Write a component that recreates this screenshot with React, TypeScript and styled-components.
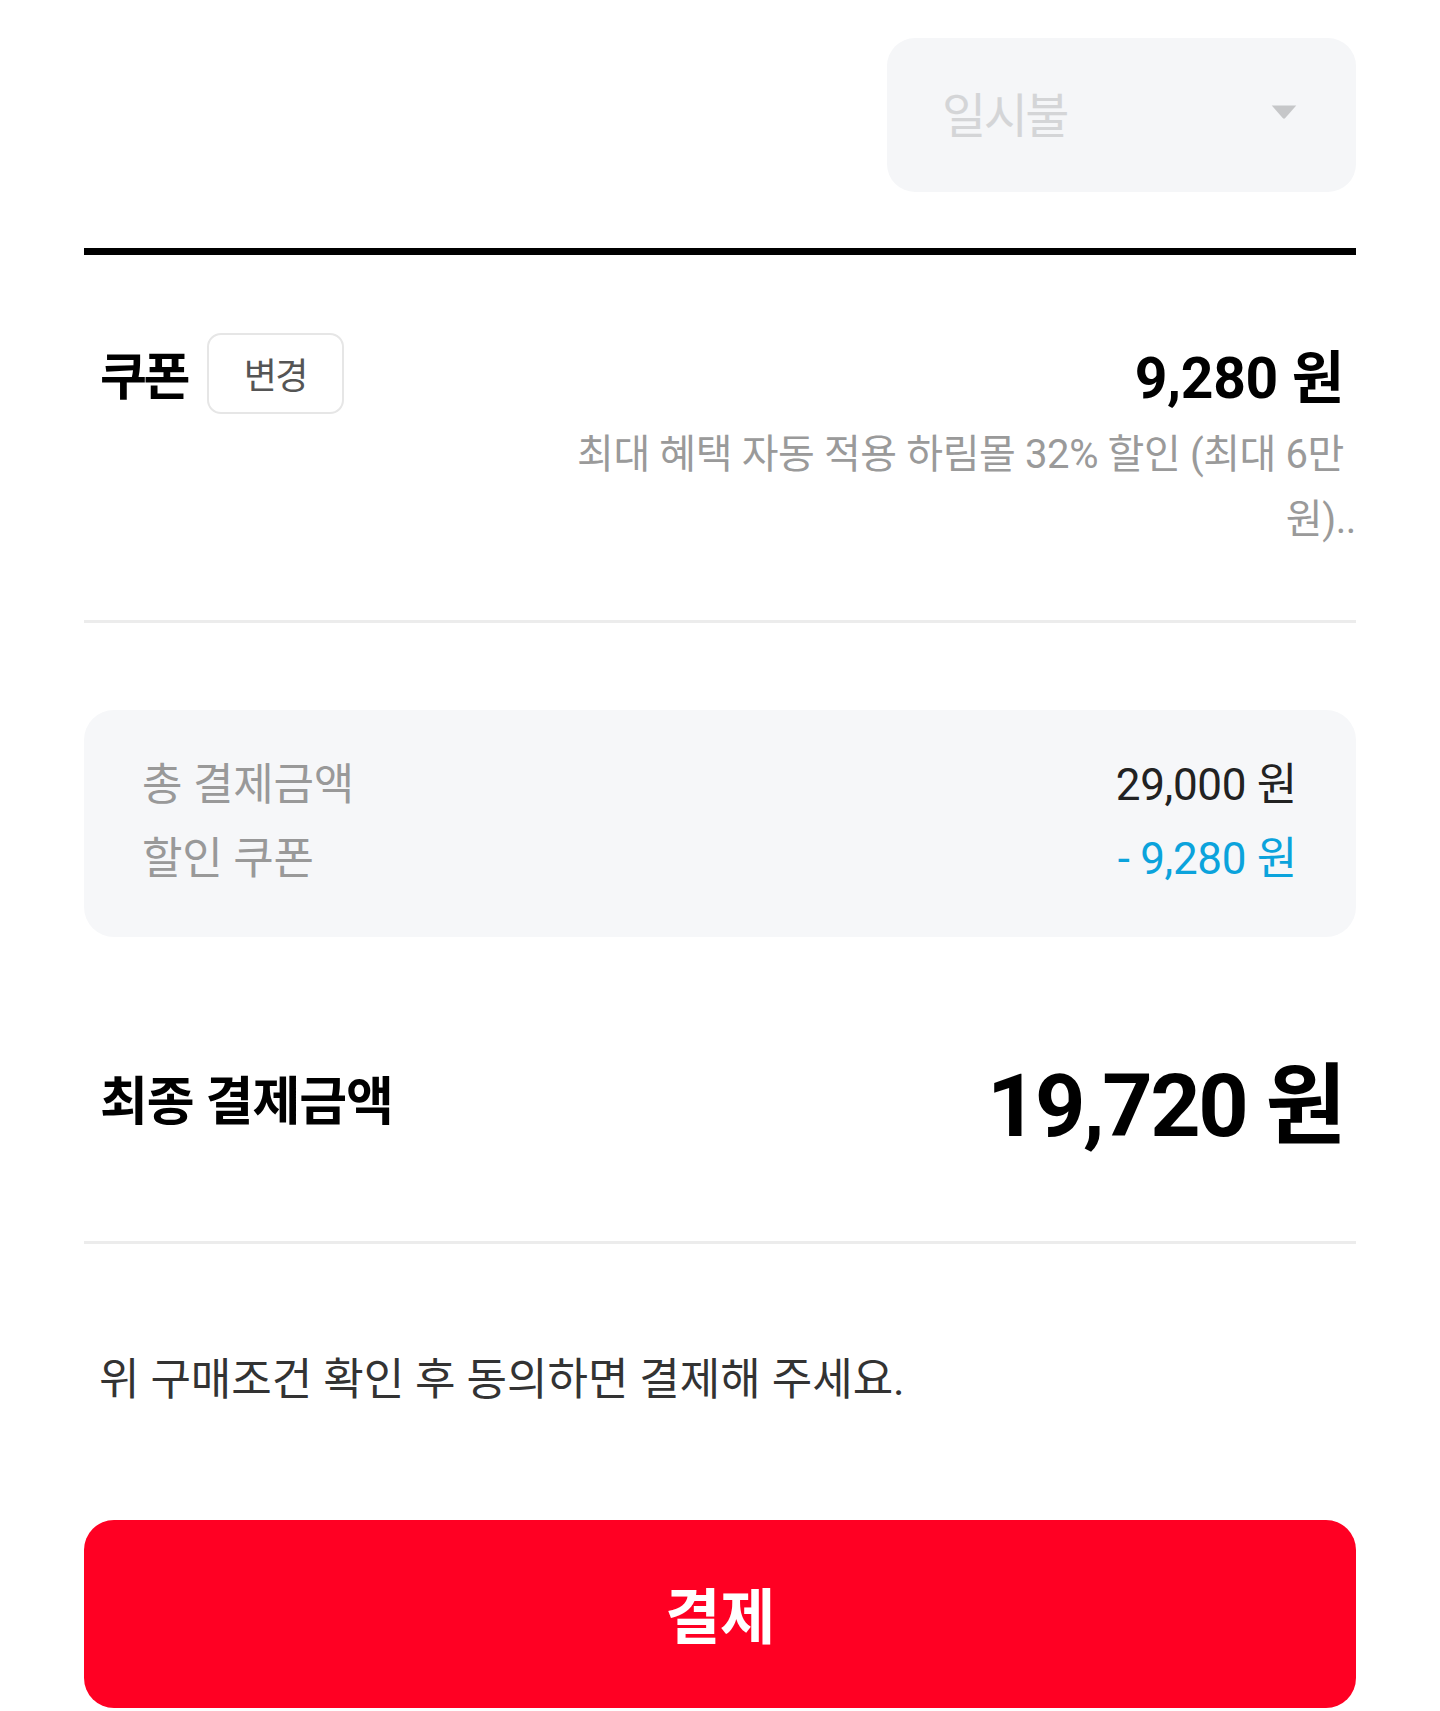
import React from "react";
import styled, { createGlobalStyle } from "styled-components";

const GlobalStyle = createGlobalStyle`
  html, body { margin: 0; padding: 0; background: #ffffff; }
  body {
    font-family: Roboto, "Noto Sans CJK KR", "Noto Sans", sans-serif;
    -webkit-font-smoothing: antialiased;
  }
  * { box-sizing: border-box; }
`;

const Page = styled.div`
  width: 1440px;
  padding: 38px 84px 3px;
  display: flex;
  flex-direction: column;
`;

const SelectRow = styled.div`
  display: flex;
  justify-content: flex-end;
`;

const SelectBox = styled.div`
  width: 469px;
  height: 154px;
  background: #f5f6f8;
  border-radius: 28px;
  padding: 0 58px 6px 55px;
  display: flex;
  align-items: center;
  justify-content: space-between;
`;

const SelectText = styled.span`
  font-size: 48px;
  letter-spacing: -2.5px;
  color: #d4d5d7;
`;

const ThickRule = styled.div`
  margin-top: 56px;
  height: 7px;
  background: #000;
`;

const ThinRule = styled.div<{ $top: number }>`
  margin-top: ${(p) => p.$top}px;
  height: 3px;
  background: #ececec;
`;

const CouponSection = styled.section`
  padding-top: 77px;
  padding-bottom: 68px;
  display: flex;
  flex-direction: column;
`;

const CouponRow = styled.div`
  display: flex;
  align-items: center;
  justify-content: space-between;
  padding: 0 12px 0 16px;
`;

const LeftGroup = styled.div`
  display: flex;
  align-items: center;
  gap: 20px;
`;

const CouponTitle = styled.h2`
  margin: 0;
  font-size: 51px;
  font-weight: 700;
  letter-spacing: -3.5px;
  color: #000;
`;

const ChangeButton = styled.button`
  width: 137px;
  height: 81px;
  border: 2px solid #e6e6e6;
  border-radius: 14px;
  background: #fff;
  font-family: inherit;
  font-size: 36px;
  letter-spacing: -1.5px;
  color: #555;
  padding: 0;
  display: flex;
  align-items: center;
  justify-content: center;
`;

const CouponAmount = styled.span`
  font-size: 57px;
  font-weight: 700;
  letter-spacing: -0.3px;
  color: #000;
`;

const CouponDesc = styled.p`
  margin: 8px 0 0;
  padding-right: 12px;
  text-align: right;
  font-size: 40px;
  line-height: 65px;
  letter-spacing: -0.4px;
  color: #9a9a9a;
`;

const Trail = styled.span`
  margin-right: -12px;
`;

const SummaryBox = styled.div`
  margin-top: 87px;
  height: 227px;
  background: #f6f7f9;
  border-radius: 30px;
  padding: 34px 59px 0 58px;
  display: flex;
  flex-direction: column;
`;

const SummaryRow = styled.div`
  display: flex;
  justify-content: space-between;
  align-items: center;
  height: 74px;
`;

const SummaryLabel = styled.span`
  font-size: 44px;
  letter-spacing: -0.2px;
  color: #999;
`;

const SummaryValue = styled.span<{ $accent?: boolean }>`
  font-size: 44px;
  letter-spacing: -0.3px;
  color: ${(p) => (p.$accent ? "#0ba3dc" : "#222")};
`;

const FinalRow = styled.div`
  margin-top: 100px;
  height: 120px;
  padding: 0 12px 0 16px;
  display: flex;
  align-items: center;
  justify-content: space-between;
`;

const FinalTitle = styled.h2`
  margin: 0;
  font-size: 52px;
  font-weight: 700;
  letter-spacing: -1px;
  color: #000;
`;

const FinalAmount = styled.span`
  font-size: 88px;
  font-weight: 700;
  letter-spacing: -2.5px;
  color: #000;
`;

const Notice = styled.p`
  margin: 106px 0 0;
  padding-left: 15px;
  font-size: 44px;
  line-height: 60px;
  letter-spacing: 0;
  color: #333;
`;

const PayButton = styled.button`
  margin-top: 110px;
  height: 188px;
  width: 100%;
  border: none;
  border-radius: 30px;
  background: #ff0023;
  color: #fff;
  font-family: inherit;
  font-size: 60px;
  font-weight: 700;
  letter-spacing: -0.5px;
  display: flex;
  align-items: center;
  justify-content: center;
  padding: 0 0 4px;
`;

const Caret = () => (
  <svg width="28" height="16" viewBox="0 0 26 15" aria-hidden="true">
    <path d="M1.5 1.5 H24.5 L14.2 13.2 Q13 14.5 11.8 13.2 Z" fill="#c6c7c9" />
  </svg>
);

export default function App() {
  return (
    <>
      <GlobalStyle />
      <Page>
        <SelectRow>
          <SelectBox>
            <SelectText>일시불</SelectText>
            <Caret />
          </SelectBox>
        </SelectRow>

        <ThickRule />

        <CouponSection>
          <CouponRow>
            <LeftGroup>
              <CouponTitle>쿠폰</CouponTitle>
              <ChangeButton>변경</ChangeButton>
            </LeftGroup>
            <CouponAmount>9,280 원</CouponAmount>
          </CouponRow>
          <CouponDesc>
            최대 혜택 자동 적용 하림몰 32% 할인 (최대 6만
            <br />
            원)<Trail>..</Trail>
          </CouponDesc>
        </CouponSection>

        <ThinRule $top={0} />

        <SummaryBox>
          <SummaryRow>
            <SummaryLabel>총 결제금액</SummaryLabel>
            <SummaryValue>29,000 원</SummaryValue>
          </SummaryRow>
          <SummaryRow>
            <SummaryLabel>할인 쿠폰</SummaryLabel>
            <SummaryValue $accent>- 9,280 원</SummaryValue>
          </SummaryRow>
        </SummaryBox>

        <FinalRow>
          <FinalTitle>최종 결제금액</FinalTitle>
          <FinalAmount>19,720 원</FinalAmount>
        </FinalRow>

        <ThinRule $top={84} />

        <Notice>위 구매조건 확인 후 동의하면 결제해 주세요.</Notice>

        <PayButton>결제</PayButton>
      </Page>
    </>
  );
}
